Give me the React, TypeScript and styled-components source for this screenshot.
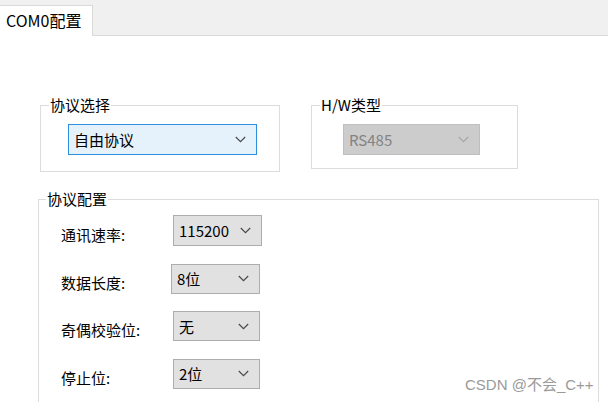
import React from "react";
import styled, { createGlobalStyle } from "styled-components";

const Global = createGlobalStyle`
  html, body { margin: 0; padding: 0; background: #ffffff; }
  body { width: 608px; height: 402px; overflow: hidden; font-family: "Noto Sans CJK SC", "Liberation Sans", sans-serif; color: #000; }
  * { box-sizing: border-box; }
`;

const Page = styled.div`
  position: relative;
  width: 608px;
  height: 402px;
  overflow: hidden;
  display: flex;
  flex-direction: column;
`;

const TabStrip = styled.div`
  height: 36px;
  background: #f0f0f0;
  border-bottom: 1px solid #d9d9d9;
  display: flex;
  align-items: flex-end;
  padding-top: 5px;
`;

const Tab = styled.div`
  height: 31px;
  width: 93px;
  margin-bottom: -1px;
  background: #ffffff;
  border: 1px solid #d9d9d9;
  border-left: none;
  border-bottom: none;
  font-size: 16px;
  line-height: 29px;
  padding-left: 6px;
  color: #000;
  white-space: nowrap;
`;

const Content = styled.div`
  flex: 1;
  padding: 61px 0 0 38px;
  display: flex;
  flex-direction: column;
  gap: 19px;
`;

const TopRow = styled.div`
  display: flex;
  gap: 31px;
  padding-left: 2px;
`;

const Group = styled.fieldset<{ $w: number; $h?: number; $pad: string }>`
  margin: 0;
  width: ${(p) => p.$w}px;
  ${(p) => (p.$h ? `height: ${p.$h}px;` : "")}
  border: 1px solid #dcdcdc;
  padding: ${(p) => p.$pad};
  min-width: 0;
`;

const Legend = styled.legend<{ $ml: number }>`
  margin-left: ${(p) => p.$ml}px;
  padding: 0 1px;
  font-size: 15px;
  line-height: 16px;
  color: #000;
`;

const Combo = styled.div<{ $w: number; $h?: number; $variant: "focus" | "normal" | "disabled" }>`
  width: ${(p) => p.$w}px;
  height: ${(p) => p.$h ?? 31}px;
  display: flex;
  align-items: center;
  justify-content: space-between;
  padding: 0 10px 0 5px;
  font-size: 15px;
  border: 1px solid
    ${(p) => (p.$variant === "focus" ? "#2e8ee0" : p.$variant === "disabled" ? "#bfbfbf" : "#adadad")};
  background: ${(p) => (p.$variant === "focus" ? "#e5f1fb" : p.$variant === "disabled" ? "#cccccc" : "#e1e1e1")};
  color: ${(p) => (p.$variant === "disabled" ? "#838383" : "#000")};
`;

const Chevron = ({ color }: { color: string }) => (
  <svg width="11" height="7" viewBox="0 0 11 7">
    <path d="M0.8 1 L5.5 5.6 L10.2 1" fill="none" stroke={color} strokeWidth="1.2" />
  </svg>
);

const ConfigGroup = styled.fieldset`
  margin: 0;
  width: 561px;
  flex: 1;
  border: 1px solid #dcdcdc;
  border-bottom: none;
  padding: 8px 0 0 22px;
  min-width: 0;
`;

const Rows = styled.div`
  display: flex;
  flex-direction: column;
  gap: 17.5px;
`;

const Row = styled.div`
  display: flex;
  align-items: center;
`;

const Label = styled.div`
  width: 112px;
  font-size: 15px;
  padding-top: 7px;
  white-space: nowrap;
`;

const ComboSlot = styled.div<{ $dx: number }>`
  margin-left: ${(p) => p.$dx}px;
`;

const Watermark = styled.div`
  position: absolute;
  left: 465px;
  top: 373px;
  font-family: "Liberation Sans", "Noto Sans CJK SC", sans-serif;
  font-size: 15px;
  color: #9a9a9a;
  white-space: nowrap;
`;

const rows = [
  { label: "通讯速率:", value: "115200", dx: 0, w: 89, h: 31 },
  { label: "数据长度:", value: "8位", dx: -2, w: 89, h: 30 },
  { label: "奇偶校验位:", value: "无", dx: 0, w: 87, h: 30 },
  { label: "停止位:", value: "2位", dx: 0, w: 87, h: 30 },
];

export default function App() {
  return (
    <Page>
      <Global />
      <TabStrip>
        <Tab>COM0配置</Tab>
      </TabStrip>
      <Content>
        <TopRow>
          <Group $w={240} $h={75} $pad="11px 0 0 27px">
            <Legend $ml={-19}>协议选择</Legend>
            <Combo $w={189} $variant="focus">
              <span>自由协议</span>
              <Chevron color="#4a4a4a" />
            </Combo>
          </Group>
          <Group $w={207} $h={72} $pad="11px 0 0 31px">
            <Legend $ml={-23}>H/W类型</Legend>
            <Combo $w={137} $variant="disabled">
              <span>RS485</span>
              <Chevron color="#a6a6a6" />
            </Combo>
          </Group>
        </TopRow>
        <ConfigGroup>
          <Legend $ml={-15}>协议配置</Legend>
          <Rows>
            {rows.map((r) => (
              <Row key={r.label}>
                <Label>{r.label}</Label>
                <ComboSlot $dx={r.dx}>
                  <Combo $w={r.w} $h={r.h} $variant="normal">
                    <span>{r.value}</span>
                    <Chevron color="#4a4a4a" />
                  </Combo>
                </ComboSlot>
              </Row>
            ))}
          </Rows>
        </ConfigGroup>
      </Content>
      <Watermark>CSDN @不会_C++</Watermark>
    </Page>
  );
}
